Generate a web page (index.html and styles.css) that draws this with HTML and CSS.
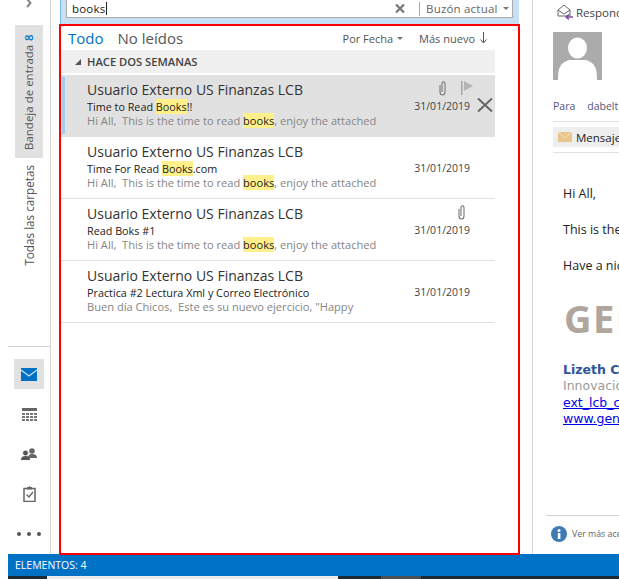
FILE: index.html
```html
<html>
  <head>
    <link rel="stylesheet" href="styles.css">
  </head>
  <body>
    <div class="app">
      <div class="main">
        <div class="nav">
          <div class="nav-top">
            <svg class="chevron" width="8" height="10" viewBox="0 0 8 10"><path d="M2 1l3.500 4-3.500 4" fill="none" stroke="#888" stroke-width="2"/></svg>
            <div class="tab active"><span class="tab-text">Bandeja de entrada <b class="count">8</b></span></div>
            <div class="tab"><span class="tab-text">Todas las carpetas</span></div>
          </div>
          <div class="nav-icons">
            <div class="nav-icon selected">
              <svg width="16" height="13" viewBox="0 0 16 13"><rect width="16" height="13" fill="#0072c6"/><path d="M0 2l8 6 8-6" fill="none" stroke="#cfe3f5" stroke-width="1.200"/></svg>
            </div>
            <div class="nav-icon">
              <svg width="15" height="13" viewBox="0 0 15 13"><rect width="15" height="3" fill="#666"/><path d="M0 5h3v2H0zM4 5h3v2H4zM8 5h3v2H8zM12 5h3v2h-3zM0 8h3v2H0zM4 8h3v2H4zM8 8h3v2H8zM12 8h3v2h-3zM0 11h3v2H0zM4 11h3v2H4zM8 11h3v2H8zM12 11h3v2h-3z" fill="#777"/></svg>
            </div>
            <div class="nav-icon">
              <svg width="16" height="12" viewBox="0 0 16 12"><circle cx="11" cy="3" r="2.800" fill="#666"/><path d="M7 10c0-3 1.500-4 4-4s5 1 5 3.500V10z" fill="#666"/><circle cx="4.500" cy="5" r="2.800" fill="#555" stroke="#fff" stroke-width=".6"/><path d="M0 12c0-3 1.500-4 4.500-4S9 9 9 12z" fill="#555"/></svg>
            </div>
            <div class="nav-icon">
              <svg width="13" height="16" viewBox="0 0 13 16"><path d="M1 2.500h11v13H1z" fill="none" stroke="#666" stroke-width="1.500"/><path d="M4 1h1.500l1-1 1 1H9v2.500H4z" fill="#666"/><path d="M3.500 8.500l2.500 2.500 4-5" fill="none" stroke="#666" stroke-width="1.300"/></svg>
            </div>
            <div class="nav-icon dots"><i></i><i></i><i></i></div>
          </div>
        </div>

        <div class="list-col">
          <div class="search">
            <div class="search-box">
              <span class="search-text">books<i class="cursor"></i></span>
              <span class="search-clear">
                <svg width="10" height="9" viewBox="0 0 10 9"><path d="M1 .5l8 8M9 .5l-8 8" stroke="#777" stroke-width="2.200"/></svg>
              </span>
              <span class="search-scope">Buzón actual</span>
              <span class="caret"></span>
            </div>
          </div>

          <div class="list-panel">
            <div class="filters">
              <span class="filter current">Todo</span>
              <span class="filter">No leídos</span>
              <span class="sort">Por Fecha <span class="caret small"></span></span>
              <span class="sort order">Más nuevo
                <svg width="7" height="12" viewBox="0 0 7 12"><path d="M3.500 0v11M.5 7.500l3 3.500 3-3.500" fill="none" stroke="#555"/></svg>
              </span>
            </div>

            <div class="messages">
              <div class="group"><span class="group-arrow"></span>HACE DOS SEMANAS</div>

              <div class="msg selected">
                <span class="read-bar"></span>
                <div class="msg-body">
                  <div class="msg-top">
                    <span class="sender">Usuario Externo US Finanzas LCB</span>
                    <svg class="clip" width="9" height="15" viewBox="0 0 9 15"><path d="M2 4v7c0 4 5 4 5 0V3C7 0 4 0 4 3v8" fill="none" stroke="#777" stroke-width="1.100"/></svg>
                    <svg class="flag" width="12" height="14" viewBox="0 0 12 14"><path d="M0 0h1.500v14H0z" fill="#a6a6a6"/><path d="M3 0l9 5-9 5z" fill="#b5b5b5"/></svg>
                  </div>
                  <div class="msg-mid">
                    <span class="subject">Time to Read <mark>Books</mark>!!</span>
                    <span class="date">31/01/2019</span>
                  </div>
                  <div class="preview">Hi All,&nbsp; This is the time to read <mark>books</mark>, enjoy the attached</div>
                </div>
                <svg class="del" width="16" height="14" viewBox="0 0 16 14"><path d="M1 .5l14 13M15 .5l-14 13" stroke="#666" stroke-width="2"/></svg>
              </div>

              <div class="msg">
                <div class="msg-body">
                  <div class="msg-top"><span class="sender">Usuario Externo US Finanzas LCB</span></div>
                  <div class="msg-mid">
                    <span class="subject">Time For Read <mark>Books</mark>.com</span>
                    <span class="date">31/01/2019</span>
                  </div>
                  <div class="preview">Hi All,&nbsp; This is the time to read <mark>books</mark>, enjoy the attached</div>
                </div>
              </div>

              <div class="msg">
                <div class="msg-body">
                  <div class="msg-top">
                    <span class="sender">Usuario Externo US Finanzas LCB</span>
                    <svg class="clip only" width="9" height="15" viewBox="0 0 9 15"><path d="M2 4v7c0 4 5 4 5 0V3C7 0 4 0 4 3v8" fill="none" stroke="#777" stroke-width="1.100"/></svg>
                  </div>
                  <div class="msg-mid">
                    <span class="subject">Read Boks #1</span>
                    <span class="date">31/01/2019</span>
                  </div>
                  <div class="preview">Hi All,&nbsp; This is the time to read <mark>books</mark>, enjoy the attached</div>
                </div>
              </div>

              <div class="msg">
                <div class="msg-body">
                  <div class="msg-top"><span class="sender">Usuario Externo US Finanzas LCB</span></div>
                  <div class="msg-mid">
                    <span class="subject">Practica #2 Lectura Xml y Correo Electrónico</span>
                    <span class="date">31/01/2019</span>
                  </div>
                  <div class="preview">Buen día Chicos,&nbsp; Este es su nuevo ejercicio, "Happy</div>
                </div>
              </div>
            </div>
          </div>
        </div>

        <div class="reader">
          <div class="reply">
            <svg width="17" height="18" viewBox="0 0 17 18"><path d="M1 7l6-5 6 5v6H1z" fill="none" stroke="#666"/><path d="M1 7l6 4 6-4" fill="none" stroke="#666"/><path d="M9 14h7M12 11.500L9 14l3 2.500" fill="none" stroke="#7b4fa0" stroke-width="1.500"/></svg>
            <span>Responder</span>
          </div>
          <div class="avatar">
            <svg width="49" height="48" viewBox="0 0 49 48"><rect width="49" height="48" fill="#ababab"/><ellipse cx="24.500" cy="16" rx="9.500" ry="10.500" fill="#fff"/><path d="M5 48c0-14 3-17 11-20h17c8 3 11 6 11 20z" fill="#fff"/></svg>
          </div>
          <div class="to"><span class="to-label">Para</span><span class="to-name">dabeltran</span></div>
          <div class="attach-row">
            <div class="attach">
              <svg width="14" height="10" viewBox="0 0 14 10"><rect width="14" height="10" fill="#eac589"/><path d="M0 0l7 6 7-6" fill="none" stroke="#f7e6c8"/></svg>
              <span>Mensaje</span>
            </div>
          </div>
          <div class="mail">
            <p>Hi All,</p>
            <p>This is the time to read</p>
            <p>Have a nice day</p>
            <div class="logo">GENERAL</div>
            <div class="sig-name">Lizeth Cortes</div>
            <div class="sig-job">Innovación</div>
            <div class="sig-link">ext_lcb_correo</div>
            <div class="sig-link">www.general.com</div>
          </div>
          <div class="people">
            <svg width="16" height="16" viewBox="0 0 16 16"><circle cx="8" cy="8" r="8" fill="#3f7ab5"/><rect x="6.800" y="7" width="2.600" height="6" fill="#fff"/><circle cx="8" cy="4.500" r="1.500" fill="#fff"/></svg>
            <span>Ver más acerca de</span>
          </div>
        </div>
      </div>

      <div class="status">ELEMENTOS: 4</div>
      <div class="taskbar">
        <span class="task dark"></span>
        <span class="task light"></span>
        <span class="task dark mid"></span>
        <span class="task grey"></span>
        <span class="task dark rest"></span>
      </div>
    </div>
  </body>
</html>
```

FILE: styles.css
```css
html,
body {
  margin: 0;
  height: 100%;
  background: #fff;
  overflow: hidden;
}
body {
  font-family: "Open Sans", "Noto Sans", sans-serif;
  color: #333;
}
svg {
  flex-shrink: 0;
}
.app {
  width: 619px;
  height: 579px;
  display: flex;
  flex-direction: column;
  padding-left: 8px;
  box-sizing: border-box;
}
.main {
  height: 554px;
  display: flex;
}

/* nav */
.nav {
  width: 42px;
  border-right: 1px solid #d4d4d4;
  display: flex;
  flex-direction: column;
  justify-content: space-between;
  flex-shrink: 0;
}
.nav-top {
  height: 347px;
  border-bottom: 1px solid #d4d4d4;
  box-sizing: border-box;
  display: flex;
  flex-direction: column;
  align-items: center;
}
.chevron {
  margin: -2px 0 17px 0;
  height: 10px;
}
.tab {
  width: 28px;
  display: flex;
  justify-content: center;
  padding: 8px 0;
  box-sizing: border-box;
}
.tab.active {
  background: #e1e1e1;
  height: 133px;
}
.tab:not(.active) {
  padding-top: 7px;
}
.tab-text {
  writing-mode: vertical-rl;
  transform: rotate(180deg);
  font-size: 11.500px;
  color: #555;
  line-height: 28px;
  white-space: nowrap;
}
.tab:not(.active) .tab-text {
  font-size: 11.700px;
}
.count {
  color: #0072c6;
  font-weight: 600;
  margin-top: 1px;
}
.nav-icons {
  display: flex;
  flex-direction: column;
  align-items: center;
  padding-bottom: 5px;
}
.nav-icon {
  width: 30px;
  height: 30px;
  margin-bottom: 10px;
  display: flex;
  align-items: center;
  justify-content: center;
}
.nav-icons .nav-icon:last-child {
  margin-bottom: 0;
}
.nav-icon.selected {
  background: #e1e1e1;
}
.dots {
  gap: 6px;
}
.dots i {
  width: 4px;
  height: 4px;
  border-radius: 50%;
  background: #555;
}

/* search + list */
.list-col {
  width: 482px;
  flex-shrink: 0;
  padding-left: 8px;
  box-sizing: border-box;
  border-right: 1px solid #d4d4d4;
  display: flex;
  flex-direction: column;
}
.search {
  width: 459px;
  height: 24px;
  background: #c7e0f4;
  border-left: 1px solid #7ab4e0;
  box-sizing: border-box;
  padding: 0 6px 6px 5px;
  margin-left: 1px;
}
.search-box {
  height: 18px;
  background: #fff;
  border-bottom: 1px solid #ababab;
  border-left: 1px solid #ababab;
  border-right: 1px solid #ababab;
  box-sizing: border-box;
  display: flex;
  align-items: center;
  font-size: 11.500px;
}
.search-text {
  flex: 1;
  color: #222;
  padding-left: 5px;
  letter-spacing: 0.2px;
  display: flex;
  align-items: center;
}
.cursor {
  width: 1px;
  height: 13px;
  background: #222;
  margin-left: 1px;
}
.search-clear {
  display: flex;
  width: 24px;
  border-right: 1px solid #ababab;
  height: 14px;
  align-items: center;
  margin-right: 6px;
}
.search-scope {
  color: #666;
  width: 77px;
  letter-spacing: 0.2px;
}
.caret {
  width: 0;
  height: 0;
  border-left: 3px solid transparent;
  border-right: 3px solid transparent;
  border-top: 3px solid #777;
  margin-right: 3px;
}
.list-panel {
  width: 461px;
  flex: 1;
  border: 2px solid #f00;
  box-sizing: border-box;
  display: flex;
  flex-direction: column;
  margin-bottom: -1px;
  position: relative;
  z-index: 1;
}
.filters {
  height: 24px;
  display: flex;
  align-items: center;
  padding-left: 7px;
  padding-right: 31px;
}
.filter {
  font-size: 15px;
  color: #555;
  margin-right: 14px;
}
.filter.current {
  color: #0072c6;
}
.sort {
  font-size: 11px;
  color: #555;
  display: flex;
  align-items: center;
  gap: 4px;
  margin-left: auto;
}
.sort.order {
  margin-left: 13px;
  gap: 5px;
}
.messages {
  width: 434px;
}
.group {
  height: 23px;
  background: #f0f0f0;
  margin-bottom: 2px;
  display: flex;
  align-items: center;
  font-size: 11.200px;
  font-weight: 600;
  color: #444;
  padding-left: 14px;
}
.group-arrow {
  width: 0;
  height: 0;
  border-left: 6px solid transparent;
  border-bottom: 6px solid #555;
  margin-right: 6px;
}
.msg {
  height: 62px;
  box-sizing: border-box;
  border-bottom: 1px solid #e1e1e1;
  display: flex;
  align-items: center;
  position: relative;
}
.msg.selected {
  background: #e1e1e1;
  border-bottom: 0;
}
.read-bar {
  position: absolute;
  left: 1px;
  top: 2px;
  bottom: 3px;
  width: 3px;
  background: #a9cbea;
}
.msg-body {
  width: 383px;
  margin-left: 26px;
  align-self: flex-start;
  padding-top: 5px;
}
.msg-top {
  height: 19px;
  display: flex;
  align-items: center;
}
.sender {
  font-size: 14px;
  color: #333;
  flex: 1;
}
.clip {
  margin-right: 14px;
  margin-bottom: 3px;
}
.clip.only {
  margin-right: 4px;
}
.flag {
  margin-right: -3px;
  margin-bottom: 3px;
}
.msg-mid {
  height: 14px;
  display: flex;
  justify-content: space-between;
  align-items: center;
  font-size: 10.800px;
  color: #222;
}
.date {
  font-size: 10.500px;
  color: #444;
}
.preview {
  height: 14px;
  margin-top: 1px;
  line-height: 14px;
  font-size: 11.100px;
  color: #858585;
  white-space: nowrap;
}
mark {
  background: #fff08c;
  color: #222;
}
.del {
  margin-left: 7px;
  margin-bottom: 2px;
}

/* reading pane */
.reader {
  flex: 1;
  min-width: 0;
  overflow: hidden;
  position: relative;
  padding-left: 20px;
  font-size: 12px;
  color: #333;
  white-space: nowrap;
}
.reply {
  height: 24px;
  display: flex;
  align-items: center;
  gap: 2px;
  font-size: 11.500px;
  color: #444;
  padding-left: 4px;
}
.avatar {
  height: 48px;
  margin-top: 8px;
}
.avatar svg {
  display: block;
}
.to {
  margin-top: 19px;
  font-size: 10.500px;
  color: #557;
  height: 22px;
}
.to-label {
  margin-right: 12px;
}
.attach-row {
  width: 200px;
  height: 32px;
  border-top: 1px solid #e1e1e1;
  border-bottom: 1px solid #e1e1e1;
  box-sizing: border-box;
  padding-top: 5px;
}
.attach {
  height: 20px;
  width: 200px;
  background: #eee;
  display: flex;
  align-items: center;
  gap: 4px;
  padding-left: 5px;
  font-size: 11.500px;
  color: #222;
}
.mail {
  padding: 33px 0 0 10px;
  color: #222;
}
.mail p {
  margin: 0 0 20px 0;
  height: 16px;
  line-height: 16px;
  font-size: 12.500px;
}
.logo {
  font-size: 38px;
  font-weight: 700;
  color: #b0a69d;
  line-height: 40px;
  letter-spacing: 1.500px;
  margin: 24px 0 24px 1px;
}
.sig-name {
  font-family: "DejaVu Sans", sans-serif;
  font-size: 12.500px;
  font-weight: 700;
  color: #2f5496;
  line-height: 16.300px;
}
.sig-job {
  font-family: "DejaVu Sans", sans-serif;
  font-size: 12.500px;
  color: #999;
  line-height: 16.300px;
}
.sig-link {
  font-family: "DejaVu Sans", sans-serif;
  font-size: 12.500px;
  color: #00e;
  text-decoration: underline;
  line-height: 16.300px;
}
.people {
  position: absolute;
  left: 13px;
  right: 0;
  top: 515px;
  height: 36px;
  border-top: 1px solid #d4d4d4;
  display: flex;
  align-items: center;
  gap: 5px;
  padding-left: 5px;
  font-size: 8.800px;
  color: #666;
}

.status {
  height: 22px;
  background: #0072c6;
  color: #fff;
  font-size: 10.500px;
  line-height: 22px;
  padding-left: 7px;
}
.taskbar {
  height: 3px;
  display: flex;
}
.task.dark {
  width: 39px;
  background: #1c2a33;
}
.task.light {
  width: 291px;
  background: #ececec;
}
.task.mid {
  width: 43px;
}
.task.grey {
  width: 40px;
  background: #4a4f54;
}
.task.rest {
  flex: 1;
}
```
